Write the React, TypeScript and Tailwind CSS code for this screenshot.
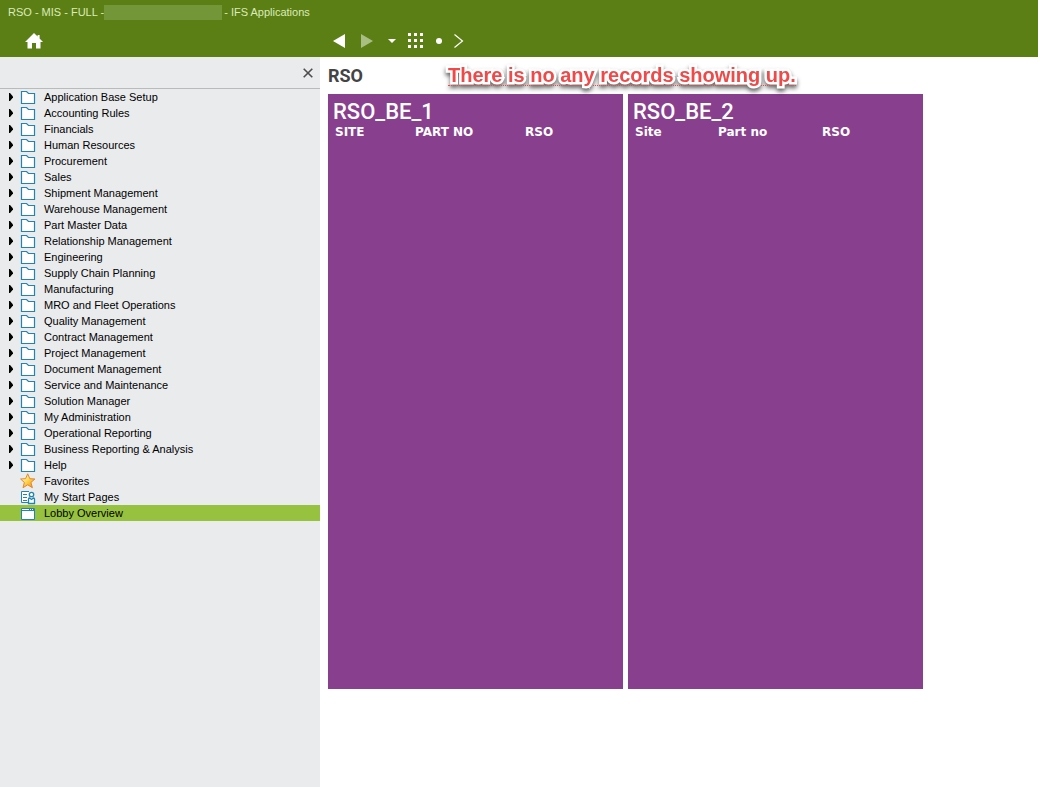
type IconName = 'folder' | 'star' | 'person' | 'window';

const folders = [
  'Application Base Setup',
  'Accounting Rules',
  'Financials',
  'Human Resources',
  'Procurement',
  'Sales',
  'Shipment Management',
  'Warehouse Management',
  'Part Master Data',
  'Relationship Management',
  'Engineering',
  'Supply Chain Planning',
  'Manufacturing',
  'MRO and Fleet Operations',
  'Quality Management',
  'Contract Management',
  'Project Management',
  'Document Management',
  'Service and Maintenance',
  'Solution Manager',
  'My Administration',
  'Operational Reporting',
  'Business Reporting & Analysis',
  'Help',
];

const lists = [
  {
    title: 'RSO_BE_1',
    columns: [
      { label: 'SITE', width: 'w-[80px]' },
      { label: 'PART NO', width: 'w-[110px]' },
      { label: 'RSO', width: '' },
    ],
  },
  {
    title: 'RSO_BE_2',
    columns: [
      { label: 'Site', width: 'w-[83px]' },
      { label: 'Part no', width: 'w-[104px]' },
      { label: 'RSO', width: '' },
    ],
  },
];

const TreeIcon = ({ name }: { name: IconName }) => {
  if (name === 'star') {
    return (
      <svg width="16" height="16" viewBox="0 0 16 16">
        <defs>
          <linearGradient id="star" x1="0" y1="0" x2="1" y2="1">
            <stop offset="0.3" stopColor="#fff08a" />
            <stop offset="0.6" stopColor="#fcc53a" />
            <stop offset="1" stopColor="#f08a1c" />
          </linearGradient>
        </defs>
        <path
          d="M7.7.8l2.1 4.9 5.1.3-4 3.5 1.5 5.2-4.7-2.9L3 14.7l1.4-5.2L.6 6l5-.3z"
          fill="url(#star)"
          stroke="#e2852f"
          strokeLinejoin="round"
        />
      </svg>
    );
  }
  if (name === 'person') {
    return (
      <svg width="16" height="16" viewBox="0 0 16 16" fill="none" stroke="#2384b0">
        <path d="M9 2.5H1.5v11H8" fill="#fff" />
        <path d="M3 5.5h4M3 8.5h4M3 11.5h4" />
        <circle cx="11.5" cy="5.5" r="2.2" fill="#fff" strokeWidth="1.3" />
        <path d="M8.5 14.5V10q0-1 1-1l2 1.5 2-1.5q1 0 1 1v4.5z" fill="#fff" strokeWidth="1.3" />
      </svg>
    );
  }
  if (name === 'window') {
    return (
      <svg width="16" height="16" viewBox="0 0 16 16">
        <path d="M1.5 3.5h13v11h-13z" fill="#fff" stroke="#2384b0" />
        <path d="M2 5.5h12" stroke="#2384b0" />
        <path d="M9 4.5h1M11 4.5h1M13 4.5h1" stroke="#2384b0" />
      </svg>
    );
  }
  return (
    <svg width="16" height="16" viewBox="0 0 16 16">
      <path d="M1.5 14.5v-12h5l2 2h6v10z" fill="#fff" stroke="#2384b0" strokeWidth="1.2" />
    </svg>
  );
};

const TreeRow = ({ label, icon, active }: { label: string; icon: IconName; active?: boolean }) => {
  return (
    <li>
      <a
        href="#"
        className={active ? 'flex h-4 items-center bg-[#97c23f]' : 'flex h-4 items-center'}
      >
        <span className="flex w-5 pl-2">
          {icon === 'folder' && (
            <svg width="6" height="8" viewBox="0 0 6 8">
              <path d="M1 0h1l3 3.5v1L2 8H1z" />
            </svg>
          )}
        </span>
        <TreeIcon name={icon} />
        <span className="ml-2 leading-4 whitespace-nowrap">{label}</span>
      </a>
    </li>
  );
};

const Sidebar = () => {
  return (
    <aside className="w-80 shrink-0 bg-[#eaebed]">
      <div className="flex h-8 items-center justify-end border-b border-[#b9babc] pr-[7px]">
        <button type="button" aria-label="Close">
          <svg width="10" height="10" viewBox="0 0 10 10" stroke="#4d4d4d" strokeWidth="1.6">
            <path d="M.7.7l8.6 8.6M9.3.7L.7 9.3" />
          </svg>
        </button>
      </div>
      <nav>
        <ul className="text-[11px] text-black">
          {folders.map((label) => (
            <TreeRow key={label} label={label} icon="folder" />
          ))}
          <TreeRow label="Favorites" icon="star" />
          <TreeRow label="My Start Pages" icon="person" />
          <TreeRow label="Lobby Overview" icon="window" active />
        </ul>
      </nav>
    </aside>
  );
};

const Header = () => {
  return (
    <header className="h-[57px] bg-[#5b7f15]">
      <div className="flex h-6 items-center pl-2 text-[11px] text-[#dcebb9]">
        <span className="whitespace-nowrap">RSO - MIS - FULL -</span>
        <span className="mr-[2px] h-[15px] w-[118px] bg-[#739639]" />
        <span className="whitespace-nowrap">- IFS Applications</span>
      </div>
      <div className="flex h-[33px] items-center">
        <div className="w-[332px] pl-[25px]">
          <button type="button" aria-label="Home" className="block">
            <svg width="18" height="16" viewBox="0 0 18 16" fill="#fff">
              <path d="M9 0l3.6 3.6V2h2v3.5L18 9h-2.5v6.5H11V10H7v5.5H2.5V9H0z" />
            </svg>
          </button>
        </div>
        <button type="button" aria-label="Back">
          <svg width="14" height="14" viewBox="0 0 14 14" fill="#fff">
            <path d="M13 0v14L1 7z" />
          </svg>
        </button>
        <button type="button" aria-label="Forward" className="ml-[14px]">
          <svg width="14" height="14" viewBox="0 0 14 14" fill="#a9be83">
            <path d="M1 0v14l12-7z" />
          </svg>
        </button>
        <button type="button" aria-label="History" className="ml-[14px]">
          <svg width="8" height="4" viewBox="0 0 8 4" fill="#fff">
            <path d="M0 0h8L4 4z" />
          </svg>
        </button>
        <button type="button" aria-label="Navigator" className="ml-3">
          <svg width="15" height="15" viewBox="0 0 15 15" stroke="#fff" strokeWidth="3" strokeDasharray="3 3">
            <path d="M0 1.5h15M0 7.5h15M0 13.5h15" />
          </svg>
        </button>
        <span className="ml-[13px] size-[6px] rounded-full bg-white" />
        <button type="button" aria-label="Next" className="ml-3">
          <svg width="10" height="14" viewBox="0 0 10 14" fill="none" stroke="#fff" strokeWidth="1.2">
            <path d="M.5.5L8.5 7l-8 6.5" />
          </svg>
        </button>
      </div>
    </header>
  );
};

const App = () => {
  return (
    <div className="flex min-h-screen flex-col bg-white font-['Liberation_Sans',Arial,sans-serif]">
      <Header />
      <div className="flex grow">
        <Sidebar />
        <main className="relative grow pl-2">
          <h1 className="flex h-[37px] items-center font-['Roboto',sans-serif] text-lg font-bold text-[#444]">
            RSO
          </h1>
          <p className="absolute top-[9px] left-32 border-b border-dotted border-[#ef4a4a] text-xl leading-[19px] font-bold whitespace-nowrap text-[#ef4a4a] [-webkit-text-stroke:5px_white] [filter:drop-shadow(0_3px_2px_rgba(0,0,0,0.6))] [paint-order:stroke_fill] [stroke-linejoin:round]">
            There is no any records showing up.
          </p>
          <div className="flex gap-[5px]">
            {lists.map((list) => (
              <section key={list.title} className="h-[595px] w-[295px] bg-[#883f8d] px-[5px] pt-1 text-white">
                <h2 className="font-['Roboto',sans-serif] text-[22px] leading-[27px] font-medium">
                  {list.title}
                </h2>
                <table className="w-full table-fixed font-['DejaVu_Sans',sans-serif] text-xs leading-[14px]">
                  <thead>
                    <tr>
                      {list.columns.map((column) => (
                        <th key={column.label} scope="col" className={`${column.width} pl-0.5 text-left font-bold`}>
                          {column.label}
                        </th>
                      ))}
                    </tr>
                  </thead>
                </table>
              </section>
            ))}
          </div>
        </main>
      </div>
    </div>
  );
};

export default App;
